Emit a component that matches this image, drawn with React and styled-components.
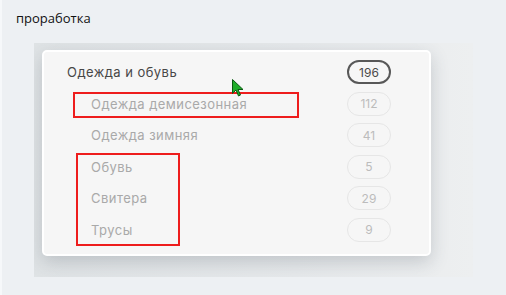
import React from 'react';
import styled, { createGlobalStyle } from 'styled-components';

const Global = createGlobalStyle`
  html, body {
    margin: 0;
    padding: 0;
    background: #edf0f3;
  }
  body {
    border-left: 2px solid #f6f8fa;
    min-height: 295px;
    box-sizing: border-box;
  }
`;

const Page = styled.div`
  width: 504px;
  height: 295px;
  overflow: hidden;
`;

const Title = styled.div`
  font-family: 'Open Sans', 'Liberation Sans', sans-serif;
  font-size: 13px;
  line-height: 16px;
  color: #111;
  padding: 10px 0 0 14px;
  height: 43px;
  box-sizing: border-box;
`;

const Shot = styled.div`
  position: relative;
  margin-left: 32px;
  width: 439px;
  height: 234px;
  box-sizing: border-box;
  padding: 7px 42px 21px 8px;
  background: linear-gradient(90deg, #dfe3e5 0%, #e6e9eb 60%, #edeff0 100%);
  overflow: hidden;
`;

const Card = styled.div`
  width: 389px;
  height: 206px;
  box-sizing: border-box;
  background: #f6f6f6;
  border: 2px solid #ffffff;
  border-radius: 5px;
  box-shadow: 0 6px 18px rgba(60, 70, 80, 0.22);
  padding: 8px 38px 0 23px;
  display: flex;
  flex-direction: column;
  gap: 7.6px;
`;

const Row = styled.div`
  display: flex;
  align-items: center;
  justify-content: space-between;
  height: 24px;
`;

const Label = styled.span`
  font-family: 'Inter', 'Noto Sans', sans-serif;
  font-size: 13px;
  letter-spacing: 0.45px;
  color: ${p => (p.$main ? '#474747' : '#a9a9a9')};
  padding-left: ${p => (p.$main ? '0' : '24px')};
`;

const Badge = styled.span`
  width: 44px;
  height: 24px;
  box-sizing: border-box;
  border-radius: 12px;
  border: ${p => (p.$main ? '2px solid #585858' : '1.5px solid #e6e6e6')};
  display: flex;
  align-items: center;
  justify-content: center;
  font-family: 'Inter', 'Noto Sans', sans-serif;
  font-size: 12px;
  color: ${p => (p.$main ? '#4a4a4a' : '#bcbcbc')};
`;

const Mark = styled.div`
  position: absolute;
  border: 2px solid #ee1d1d;
  box-sizing: border-box;
`;

const Cursor = styled.svg`
  position: absolute;
  left: 198px;
  top: 36px;
`;

const items = [
  { name: 'Одежда и обувь', count: 196, main: true },
  { name: 'Одежда демисезонная', count: 112 },
  { name: 'Одежда зимняя', count: 41 },
  { name: 'Обувь', count: 5 },
  { name: 'Свитера', count: 29 },
  { name: 'Трусы', count: 9 },
];

export default function App() {
  return (
    <Page>
      <Global />
      <Title>проработка</Title>
      <Shot>
        <Card>
          {items.map(it => (
            <Row key={it.name}>
              <Label $main={it.main}>{it.name}</Label>
              <Badge $main={it.main}>{it.count}</Badge>
            </Row>
          ))}
        </Card>

        {/* annotation frames */}
        <Mark style={{ left: 39, top: 49, width: 226, height: 26 }} />
        <Mark style={{ left: 42, top: 110, width: 104, height: 93 }} />

        <Cursor width="12" height="18" viewBox="0 0 12 18">
          <path
            d="M0.5 0.5 L0.5 14.5 L4 11 L6.5 17 L8.5 16 L6 10.5 L11 10.5 Z"
            fill="#1fae2a"
            stroke="#0b5a12"
            strokeWidth="1"
            strokeLinejoin="round"
          />
        </Cursor>
      </Shot>
    </Page>
  );
}
